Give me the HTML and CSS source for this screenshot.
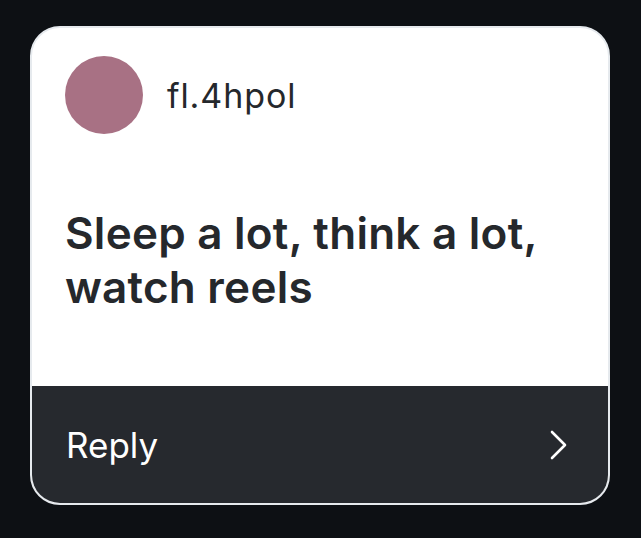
FILE: index.html
```html
<!DOCTYPE html>
<html>
<head>
<meta charset="utf-8">
<link rel="stylesheet" href="styles.css">
</head>
<body>
<div class="card">
  <div class="main">
    <div class="header">
      <div class="avatar"></div>
      <div class="username">fl.4hpol</div>
    </div>
    <div class="message">Sleep a lot, think a lot, watch reels</div>
  </div>
  <div class="footer">
    <span class="reply">Reply</span>
    <svg class="chevron" width="18" height="30" viewBox="0 0 18 30" fill="none" stroke="#ffffff" stroke-width="2.6" stroke-linecap="round" stroke-linejoin="round"><path d="M2 2 L15 15 L2 28"/></svg>
  </div>
</div>
</body>
</html>
```
FILE: styles.css
```css
html, body {
  margin: 0;
  padding: 0;
  background: #0d1014;
}
body {
  padding: 26px 31px 33px 30px;
  font-family: Inter, "Noto Sans", sans-serif;
}
.card {
  width: 576px;
  height: 475px;
  border: 2px solid #e6eaee;
  border-radius: 30px;
  background: #ffffff;
  overflow: hidden;
  display: flex;
  flex-direction: column;
}
.main {
  flex: 1;
  padding: 28px 33px 0 33px;
}
.header {
  display: flex;
  align-items: center;
  gap: 24px;
}
.avatar {
  width: 78px;
  height: 78px;
  border-radius: 50%;
  background: #a87184;
}
.username {
  font-size: 34px;
  letter-spacing: 0.9px;
  color: #25282c;
}
.message {
  margin-top: 72px;
  font-size: 44px;
  font-weight: 600;
  letter-spacing: 0.25px;
  line-height: 54px;
  color: #25282c;
}
.footer {
  height: 117px;
  background: #26292e;
  display: flex;
  align-items: center;
  justify-content: space-between;
  padding: 0 40px 0 34px;
}
.reply {
  color: #ffffff;
  font-size: 35px;
}
.chevron {
  display: block;
}
```
